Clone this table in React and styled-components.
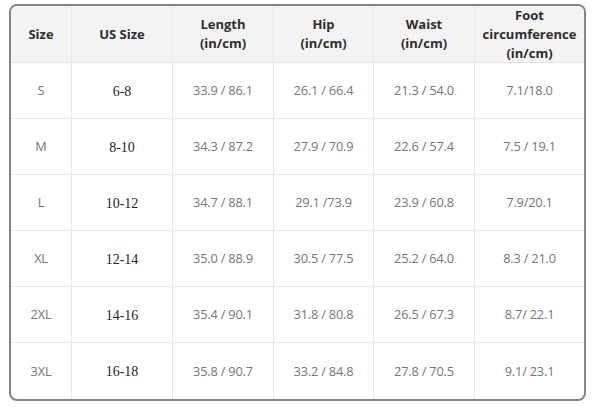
import React from "react";
import styled, { createGlobalStyle } from "styled-components";

const Global = createGlobalStyle`
  html, body { margin: 0; padding: 0; background: #ffffff; }
  body { font-family: "Open Sans", "Noto Sans", sans-serif; }
`;

const Frame = styled.div`
  box-sizing: border-box;
  margin: 4px 0 0 9px;
  width: 577px;
  border: 2px solid #858585;
  border-radius: 8px;
  overflow: hidden;
  background: #fff;
`;

const Grid = styled.div`
  display: grid;
  grid-template-columns: 61px 101px 101px 100px 101px 1fr;
  grid-template-rows: 57px repeat(6, 56px);
`;

const Cell = styled.div`
  box-sizing: border-box;
  display: flex;
  align-items: center;
  justify-content: center;
  text-align: center;
  border-right: ${(p) => (p.$lastCol ? "none" : "1px solid #e8e8e8")};
  border-bottom: ${(p) => (p.$lastRow ? "none" : "1px solid #e8e8e8")};
`;

const HeadCell = styled(Cell)`
  background: #f3f3f3;
  color: #2e2e2e;
  font-weight: 700;
  font-size: 13px;
  line-height: 19px;
  border-bottom-color: #e4e4e4;
`;

const DataCell = styled(Cell)`
  color: #767676;
  font-size: 12.8px;
  letter-spacing: -0.2px;
  padding-bottom: 1px;
`;

const UsCell = styled(Cell)`
  color: #262626;
  font-family: "Liberation Serif", "DejaVu Serif", serif;
  font-size: 14px;
  padding-top: 2px;
`;

const headers = [
  ["Size"],
  ["US Size"],
  ["Length", "(in/cm)"],
  ["Hip", "(in/cm)"],
  ["Waist", "(in/cm)"],
  ["Foot", "circumference", "(in/cm)"],
];

const rows = [
  ["S", "6-8", "33.9 / 86.1", "26.1 / 66.4", "21.3 / 54.0", "7.1/18.0"],
  ["M", "8-10", "34.3 / 87.2", "27.9 / 70.9", "22.6 / 57.4", "7.5 / 19.1"],
  ["L", "10-12", "34.7 / 88.1", "29.1 /73.9", "23.9 / 60.8", "7.9/20.1"],
  ["XL", "12-14", "35.0 / 88.9", "30.5 / 77.5", "25.2 / 64.0", "8.3 / 21.0"],
  ["2XL", "14-16", "35.4 / 90.1", "31.8 / 80.8", "26.5 / 67.3", "8.7/ 22.1"],
  ["3XL", "16-18", "35.8 / 90.7", "33.2 / 84.8", "27.8 / 70.5", "9.1/ 23.1"],
];

export default function App() {
  return (
    <>
      <Global />
      <Frame>
        <Grid>
          {headers.map((lines, i) => (
            <HeadCell key={"h" + i} $lastCol={i === headers.length - 1}>
              <span>
                {lines.map((l, j) => (
                  <React.Fragment key={j}>
                    {j > 0 && <br />}
                    {l}
                  </React.Fragment>
                ))}
              </span>
            </HeadCell>
          ))}
          {rows.map((row, r) =>
            row.map((v, c) => {
              const props = {
                key: r + "-" + c,
                $lastCol: c === row.length - 1,
                $lastRow: r === rows.length - 1,
              };
              return c === 1 ? (
                <UsCell {...props}>{v}</UsCell>
              ) : (
                <DataCell {...props}>{v}</DataCell>
              );
            })
          )}
        </Grid>
      </Frame>
    </>
  );
}
